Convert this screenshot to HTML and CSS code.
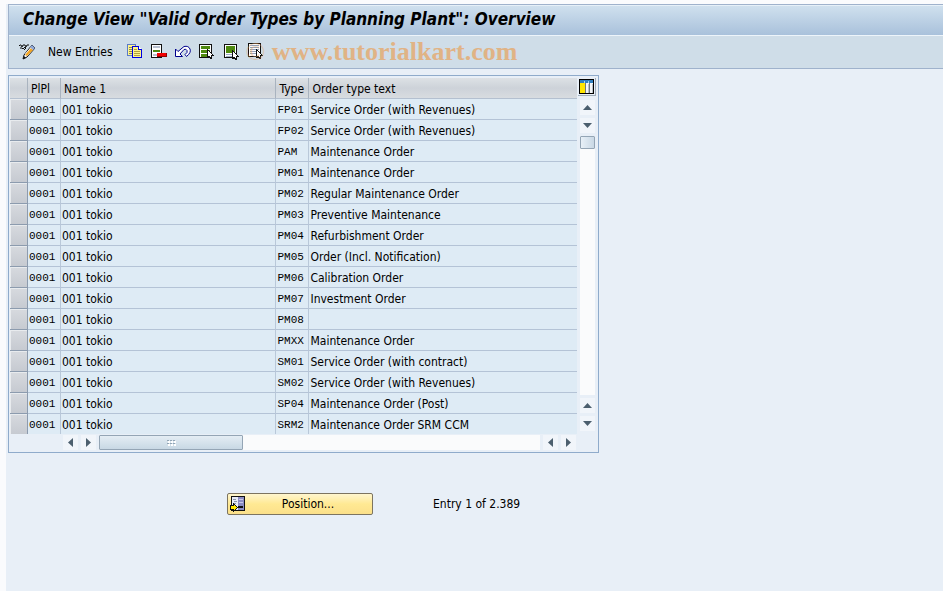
FILE: index.html
```
<!DOCTYPE html>
<html lang="en">
  <head>
    <meta charset="UTF-8" />
    <meta name="viewport" content="width=device-width, initial-scale=1.0" />
    <title>Change View "Valid Order Types by Planning Plant": Overview</title>
    <link rel="stylesheet" href="styles.css">
  </head>
  <body>
    <div class="app">
      <header class="header">
        <h1 class="title">Change View "Valid Order Types by Planning Plant": Overview</h1>
        <div class="toolbar">
          <button class="tool" aria-label="Display or change">
            <svg width="16" height="16" viewBox="0 0 16 16">
              <path d="M0 2l1-1h1l1 2 1-2h2l1 2 1-2h2M1 4h2l1 1 2-2 1 1M5 6l2-2" fill="none" stroke="#111" />
              <path d="M13 1l3 3-8 9-4 2 1-4z" fill="#fff" stroke="#111" />
              <path d="M13 2l2 2-7 8-2-2z" fill="#fff" />
              <path d="M12 4l2 2-6 6-2-1z" fill="#f5a623" />
              <path d="M13 1l3 3-2 2-3-3z" fill="#8fa8d8" />
              <path d="M5 12l2 2-3 1z" fill="#111" />
            </svg>
          </button>
          <button class="tool tool-text">New Entries</button>
          <button class="tool" aria-label="Copy as">
            <svg width="16" height="16" viewBox="0 0 16 16" shape-rendering="crispEdges">
              <path d="M0.500 0.500h8v11h-8z" fill="#fff48c" stroke="#5a7ac8" />
              <path d="M2 3.500h4M2 5.500h3M2 7.500h3M2 9.500h3" stroke="#8c8c50" />
              <path d="M5.500 2.500h6l3 3v8h-9z" fill="#fff48c" stroke="#0000e0" />
              <path d="M11.500 2.500v3h3" fill="#fff" stroke="#0000e0" />
              <path d="M7 5.500h3M7 7.500h6M7 9.500h6M7 11.500h6" stroke="#b0a040" />
            </svg>
          </button>
          <button class="tool" aria-label="Delete">
            <svg width="16" height="16" viewBox="0 0 16 16" shape-rendering="crispEdges">
              <path d="M0.500 0.500h10v13h-10z" fill="#fff" stroke="#111" />
              <path d="M2 2h7v2h-7zM2 10h4v2h-4z" fill="#b8c0d0" />
              <path d="M2 6h7v2h-7z" fill="#4e8a10" />
              <path d="M6 9h10v4h-10z" fill="#900000" />
              <path d="M7 10h8v2h-8z" fill="#f00000" />
              <path d="M6 9h9v3h-9z" fill="#f00000" />
            </svg>
          </button>
          <button class="tool" aria-label="Undo change">
            <svg width="16" height="16" viewBox="0 0 16 16">
              <path d="M0.500 5v7.500h7l-2.500-2.500 4-4.500q2-1 3 1t-2 4l1.500 2q5-4 3.500-7.500t-6-2.500l-6 5z" fill="#fff" stroke="#00008c" />
            </svg>
          </button>
          <button class="tool" aria-label="Select all">
            <svg width="16" height="16" viewBox="0 0 16 16" shape-rendering="crispEdges">
              <path d="M0.500 0.500h12v13h-12z" fill="#fff" stroke="#111" />
              <path d="M2 2h9v3h-9zM2 6h9v3h-9zM2 10h9v3h-9z" fill="#4e8a10" />
              <path d="M8.500 5.500v8l2-1 1 2h1v-3h2z" fill="#fff" stroke="#111" />
            </svg>
          </button>
          <button class="tool" aria-label="Select block">
            <svg width="16" height="16" viewBox="0 0 16 16" shape-rendering="crispEdges">
              <path d="M1.500 0.500h12v13h-12z" fill="#fff" stroke="#111" />
              <path d="M3 2h9v7h-9z" fill="#4e8a10" />
              <path d="M3 10h7v1h-7zM3 12h7v1h-7z" fill="#9cacc4" />
              <path d="M9.500 6.500v8l2-1 1 2h1v-3h2z" fill="#fff" stroke="#111" />
            </svg>
          </button>
          <span class="marked">
            <button class="tool" aria-label="Deselect all">
              <svg width="16" height="16" viewBox="0 0 16 16" shape-rendering="crispEdges">
                <path d="M1.500 0.500h12v13h-12z" fill="#fff" stroke="#111" />
                <path d="M3 2.500h9M3 4.500h9M3 6.500h9M3 8.500h9M3 10.500h9" stroke="#90a0b8" />
                <path d="M9.500 6.500v8l2-1 1 2h1v-3h2z" fill="#fff" stroke="#111" />
              </svg>
            </button>
            <span class="watermark"><span class="copyright">©</span> www.tutorialkart.com</span>
          </span>
        </div>
      </header>

      <main>
        <div class="panel">
          <div class="grid-area">
            <table class="grid">
              <colgroup>
                <col class="col-select"><col class="col-code"><col class="col-name"><col class="col-code"><col class="col-text">
              </colgroup>
              <thead>
                <tr><th></th><th>PlPl</th><th>Name 1</th><th>Type</th><th>Order type text</th></tr>
              </thead>
              <tbody>
                <tr><td class="sel"><button aria-label="Select row 1"></button></td><td class="code">0001</td><td>001 tokio</td><td class="code">FP01</td><td>Service Order (with Revenues)</td></tr>
                <tr><td class="sel"><button aria-label="Select row 2"></button></td><td class="code">0001</td><td>001 tokio</td><td class="code">FP02</td><td>Service Order (with Revenues)</td></tr>
                <tr><td class="sel"><button aria-label="Select row 3"></button></td><td class="code">0001</td><td>001 tokio</td><td class="code">PAM</td><td>Maintenance Order</td></tr>
                <tr><td class="sel"><button aria-label="Select row 4"></button></td><td class="code">0001</td><td>001 tokio</td><td class="code">PM01</td><td>Maintenance Order</td></tr>
                <tr><td class="sel"><button aria-label="Select row 5"></button></td><td class="code">0001</td><td>001 tokio</td><td class="code">PM02</td><td>Regular Maintenance Order</td></tr>
                <tr><td class="sel"><button aria-label="Select row 6"></button></td><td class="code">0001</td><td>001 tokio</td><td class="code">PM03</td><td>Preventive Maintenance</td></tr>
                <tr><td class="sel"><button aria-label="Select row 7"></button></td><td class="code">0001</td><td>001 tokio</td><td class="code">PM04</td><td>Refurbishment Order</td></tr>
                <tr><td class="sel"><button aria-label="Select row 8"></button></td><td class="code">0001</td><td>001 tokio</td><td class="code">PM05</td><td>Order (Incl. Notification)</td></tr>
                <tr><td class="sel"><button aria-label="Select row 9"></button></td><td class="code">0001</td><td>001 tokio</td><td class="code">PM06</td><td>Calibration Order</td></tr>
                <tr><td class="sel"><button aria-label="Select row 10"></button></td><td class="code">0001</td><td>001 tokio</td><td class="code">PM07</td><td>Investment Order</td></tr>
                <tr><td class="sel"><button aria-label="Select row 11"></button></td><td class="code">0001</td><td>001 tokio</td><td class="code">PM08</td><td></td></tr>
                <tr><td class="sel"><button aria-label="Select row 12"></button></td><td class="code">0001</td><td>001 tokio</td><td class="code">PMXX</td><td>Maintenance Order</td></tr>
                <tr><td class="sel"><button aria-label="Select row 13"></button></td><td class="code">0001</td><td>001 tokio</td><td class="code">SM01</td><td>Service Order (with contract)</td></tr>
                <tr><td class="sel"><button aria-label="Select row 14"></button></td><td class="code">0001</td><td>001 tokio</td><td class="code">SM02</td><td>Service Order (with Revenues)</td></tr>
                <tr><td class="sel"><button aria-label="Select row 15"></button></td><td class="code">0001</td><td>001 tokio</td><td class="code">SP04</td><td>Maintenance Order (Post)</td></tr>
                <tr><td class="sel"><button aria-label="Select row 16"></button></td><td class="code">0001</td><td>001 tokio</td><td class="code">SRM2</td><td>Maintenance Order SRM CCM</td></tr>
              </tbody>
            </table>
            <div class="side">
              <button class="config" aria-label="Table settings">
                <svg width="15" height="15" viewBox="0 0 15 15" shape-rendering="crispEdges">
                  <path d="M0 0h15v15h-15z" fill="#000" />
                  <path d="M1 1h13v3h-13z" fill="#2f7fc0" />
                  <path d="M1 4h5v10h-5z" fill="#ffe600" />
                  <path d="M6 4h8v10h-8z" fill="#707880" />
                  <path d="M7 4h3v10h-3zM11 4h3v10h-3z" fill="#f4f6f8" />
                  <path d="M9 5h1v9h-1zM13 5h1v9h-1z" fill="#b8c0c8" />
                  <path d="M5 2h1v2h-1zM9 2h1v2h-1z" fill="#9cd0f0" />
                </svg>
              </button>
              <div class="vscroll">
                <button class="arrow" aria-label="Scroll to top"><svg width="9" height="5" viewBox="0 0 9 5"><path d="M0 5l4.500-5 4.500 5z" fill="#4c5f6e" /></svg></button>
                <button class="arrow" aria-label="Scroll up"><svg width="9" height="5" viewBox="0 0 9 5"><path d="M0 0l4.500 5 4.500-5z" fill="#4c5f6e" /></svg></button>
                <div class="vtrack"><div class="vthumb"></div></div>
                <button class="arrow" aria-label="Scroll down"><svg width="9" height="5" viewBox="0 0 9 5"><path d="M0 5l4.500-5 4.500 5z" fill="#4c5f6e" /></svg></button>
                <button class="arrow" aria-label="Scroll to bottom"><svg width="9" height="5" viewBox="0 0 9 5"><path d="M0 0l4.500 5 4.500-5z" fill="#4c5f6e" /></svg></button>
              </div>
            </div>
          </div>
          <div class="hscroll">
            <button class="arrow" aria-label="Scroll to first column"><svg width="5" height="9" viewBox="0 0 5 9"><path d="M5 0l-5 4.500 5 4.500z" fill="#4c5f6e" /></svg></button>
            <button class="arrow" aria-label="Scroll left"><svg width="5" height="9" viewBox="0 0 5 9"><path d="M0 0l5 4.500-5 4.500z" fill="#4c5f6e" /></svg></button>
            <div class="htrack">
              <div class="hthumb">
                <svg width="9" height="6" viewBox="0 0 9 6" shape-rendering="crispEdges">
                  <path d="M1 1h2v2h-2zM4 1h2v2h-2zM7 1h2v2h-2zM1 4h2v2h-2zM4 4h2v2h-2zM7 4h2v2h-2z" fill="#fff" />
                  <path d="M0 0h2v1h-2zM3 0h2v1h-2zM6 0h2v1h-2zM0 3h2v1h-2zM3 3h2v1h-2zM6 3h2v1h-2z" fill="#93a5b5" />
                </svg>
              </div>
            </div>
            <button class="arrow" aria-label="Scroll right"><svg width="5" height="9" viewBox="0 0 5 9"><path d="M5 0l-5 4.500 5 4.500z" fill="#4c5f6e" /></svg></button>
            <button class="arrow" aria-label="Scroll to last column"><svg width="5" height="9" viewBox="0 0 5 9"><path d="M0 0l5 4.500-5 4.500z" fill="#4c5f6e" /></svg></button>
          </div>
        </div>

        <div class="footer">
          <button class="position">
            <svg width="16" height="16" viewBox="0 0 16 16" shape-rendering="crispEdges">
              <path d="M1.500 0.500h13v14h-13z" fill="#e8ecf8" stroke="#111" />
              <path d="M8 1h6v13h-6z" fill="#8c8cc4" />
              <path d="M9 3.500h4M9 6.500h4" stroke="#c8c8e8" />
              <path d="M3 3.500h3M4 5.500h3M3 7.500h3" stroke="#8894a8" />
              <path d="M8 10.500h5" stroke="#111" stroke-width="2" />
              <path d="M0.500 9.500h3v-2l4 4-4 4v-2h-3z" fill="#ffe600" stroke="#111" />
            </svg>
            <span>Position...</span>
          </button>
          <span>Entry 1 of 2.389</span>
        </div>
      </main>
    </div>
  </body>
</html>
```
FILE: styles.css
```
* {
  box-sizing: border-box;
}
body {
  margin: 0;
  padding: 4px 0 0 6px;
  min-height: 100vh;
  display: flex;
  background-color: #fafbfd;
  font-family: Tahoma, "DejaVu Sans Condensed", "DejaVu Sans", sans-serif;
  font-size: 12px;
  color: #000;
}
button {
  font: inherit;
  color: inherit;
  padding: 0;
  border: none;
  background: none;
  cursor: pointer;
}
svg {
  display: block;
}
.app {
  flex: 1;
  min-width: 0;
  padding-left: 2px;
  background-color: #e8eff7;
}
.header {
  border: 1px solid #9fb2cc;
  border-right: none;
}
.title {
  margin: 0;
  padding: 0 14px;
  height: 30px;
  line-height: 26px;
  font-size: 17px;
  font-weight: bold;
  font-style: italic;
  white-space: nowrap;
  background: linear-gradient(#cfe0ee, #a9c1db);
  border-top: 1px solid #e6f0f8;
}
.toolbar {
  display: flex;
  align-items: center;
  gap: 8px;
  height: 33px;
  padding: 0 10px;
  background-color: #cfdde8;
  border-top: 1px solid #edf4fa;
}
.tool-text {
  margin: 0 6px 0 5px;
  white-space: nowrap;
}
.marked {
  position: relative;
}
.watermark {
  position: absolute;
  left: -1px;
  top: -6px;
  font-family: "Liberation Serif", serif;
  font-size: 26px;
  font-weight: bold;
  line-height: 30px;
  color: #e8a25c;
  opacity: 0.7;
  white-space: nowrap;
  pointer-events: none;
}
.copyright {
  font-weight: normal;
  opacity: 0.6;
}

.panel {
  max-width: 591px;
  margin-top: 6px;
  padding: 2px 1px;
  border: 1px solid #8fabcb;
}
.grid-area {
  display: flex;
}
.grid {
  flex: 1;
  min-width: 0;
  table-layout: fixed;
  border-collapse: separate;
  border-spacing: 0;
}
.col-select {
  width: 18px;
}
.col-code {
  width: 33px;
}
.col-name {
  width: 38%;
}
.grid th {
  height: 21px;
  padding: 2px 2px 0 3px;
  text-align: left;
  font-weight: normal;
  white-space: nowrap;
  background: linear-gradient(#dde1e5, #cdd2d9 50%, #d8dce0);
  border-right: 1px solid #a9b3bf;
  border-bottom: 1px solid #b4c0d0;
}
.grid td {
  height: 21px;
  padding: 2px 0 0 1px;
  white-space: nowrap;
  background-color: #deebf5;
  border-right: 1px solid #b9c8d9;
  border-bottom: 1px solid #b4c3d6;
}
.grid th:last-child,
.grid td:last-child {
  border-right: none;
}
.grid tr:last-child td {
  height: 20px;
  border-bottom: none;
}
.grid thead th {
  height: 21px;
}
.grid .code {
  font-family: "Liberation Mono", monospace;
  font-size: 11px;
}
.grid .sel {
  padding: 0;
  border-right-color: #8c9bae;
  border-bottom-color: #8c9bae;
}
.sel button {
  display: block;
  width: 100%;
  height: 20px;
  background: linear-gradient(#d6d9de, #c6cad1);
  border: 1px solid #e8ebee;
  border-width: 1px 0 0 1px;
}
.side {
  display: flex;
  flex-direction: column;
  align-items: center;
  width: 20px;
}
.config {
  padding: 1px;
  border: 1px solid #a0adba;
  border-width: 0 1px 1px 0;
}
.vscroll {
  flex: 1;
  display: flex;
  flex-direction: column;
  gap: 3px;
  padding: 4px 0 3px;
}
.arrow {
  display: flex;
  justify-content: center;
  align-items: center;
  width: 15px;
  height: 15px;
  background-color: #f1f5fa;
}
.vtrack {
  flex: 1;
  background-color: #fafbfc;
}
.vthumb {
  height: 13px;
  background: linear-gradient(90deg, #e8f0f7, #c9d8e5);
  border: 1px solid #94a5b5;
  border-radius: 1px;
}
.hscroll {
  display: flex;
  gap: 3px;
  padding: 1px 21px 0 53px;
}
.htrack {
  flex: 1;
  background-color: #fafbfc;
}
.hthumb {
  display: flex;
  justify-content: center;
  align-items: center;
  width: 144px;
  height: 15px;
  background: linear-gradient(#e4edf4, #c8d8e4);
  border: 1px solid #94a5b5;
  border-radius: 1px;
}

.footer {
  display: flex;
  align-items: center;
  gap: 60px;
  padding: 40px 0 0 219px;
}
.position {
  display: flex;
  align-items: center;
  width: 146px;
  height: 22px;
  padding: 0 2px;
  background: linear-gradient(#fff6cf, #ffe993 50%, #fbe08a);
  border: 1px solid #7c7460;
  border-radius: 2px;
}
.position span {
  flex: 1;
  text-align: center;
}
```
